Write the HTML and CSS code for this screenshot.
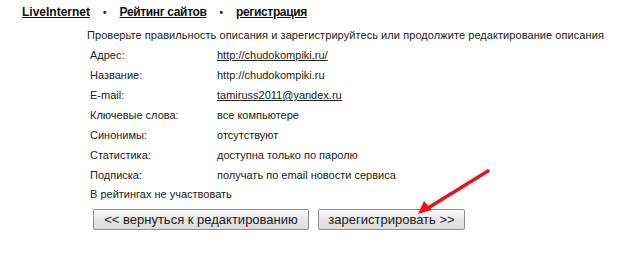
FILE: index.html
```html
<!DOCTYPE html>
<html>
<head>
<meta charset="utf-8">
<link rel="stylesheet" href="styles.css">
</head>
<body>
<div class="page">
  <nav class="nav">
    <a class="nav-link" href="#">LiveInternet</a>
    <span class="dot">•</span>
    <a class="nav-link nav-ru" href="#">Рейтинг сайтов</a>
    <span class="dot">•</span>
    <a class="nav-link nav-ru" href="#">регистрация</a>
  </nav>
  <div class="content">
    <p class="intro">Проверьте правильность описания и зарегистрируйтесь или продолжите редактирование описания</p>
    <div class="table">
      <div class="label">Адрес:</div><div class="value"><a href="#">http://chudokompiki.ru/</a></div>
      <div class="label">Название:</div><div class="value">http://chudokompiki.ru</div>
      <div class="label">E-mail:</div><div class="value"><a href="#">tamiruss2011@yandex.ru</a></div>
      <div class="label">Ключевые слова:</div><div class="value">все компьютере</div>
      <div class="label">Синонимы:</div><div class="value">отсутствуют</div>
      <div class="label">Статистика:</div><div class="value">доступна только по паролю</div>
      <div class="label">Подписка:</div><div class="value">получать по email новости сервиса</div>
    </div>
    <div class="note">В рейтингах не участвовать</div>
    <div class="buttons">
      <button class="btn btn-back">&lt;&lt; вернуться к редактированию</button>
      <button class="btn btn-reg">зарегистрировать &gt;&gt;</button>
    </div>
  </div>
  <svg class="arrow" width="617" height="254" viewBox="0 0 617 254">
    <line x1="488" y1="171" x2="428" y2="208" stroke="#e8141c" stroke-width="3.5" stroke-linecap="round"/>
    <polygon points="418,214 424,201 432,210" fill="#e8141c"/>
  </svg>
</div>
</body>
</html>
```
FILE: styles.css
```css
html, body {
  margin: 0;
  padding: 0;
  background: #fff;
}
body {
  font-family: "Liberation Sans", Arial, sans-serif;
  font-size: 11px;
  color: #222;
}
.page {
  position: relative;
  width: 617px;
  height: 254px;
  overflow: hidden;
}
.nav {
  display: flex;
  align-items: center;
  padding: 5px 0 0 22px;
  height: 14px;
  font-weight: bold;
  font-size: 12px;
}
.nav-link {
  color: #111;
  text-decoration: underline;
}
.nav-ru {
  letter-spacing: -0.35px;
}
.dot {
  margin: 0 13px;
  font-size: 10px;
}
.content {
  padding: 6px 0 0 87px;
}
.intro {
  margin: 0;
  height: 20px;
  line-height: 20px;
  letter-spacing: 0.07px;
}
.table {
  display: grid;
  grid-template-columns: 127px auto;
  grid-auto-rows: 20px;
  align-items: center;
  padding-left: 3px;
}
.value a {
  color: #222;
  text-decoration: underline;
}
.note {
  height: 18px;
  line-height: 18px;
  padding-left: 3px;
}
.buttons {
  display: flex;
  gap: 9px;
  padding: 6px 0 0 6px;
}
.btn {
  font-family: "Liberation Sans", Arial, sans-serif;
  font-size: 13px;
  color: #222;
  height: 21px;
  padding: 0;
  white-space: nowrap;
  border: 1px solid #8e8e8e;
  border-radius: 2px;
  background: linear-gradient(#fafafa, #e6e6e6 50%, #dcdcdc);
}
.btn-back { width: 216px; }
.btn-reg { width: 147px; }
.arrow {
  position: absolute;
  left: 0;
  top: 0;
  pointer-events: none;
}
```
